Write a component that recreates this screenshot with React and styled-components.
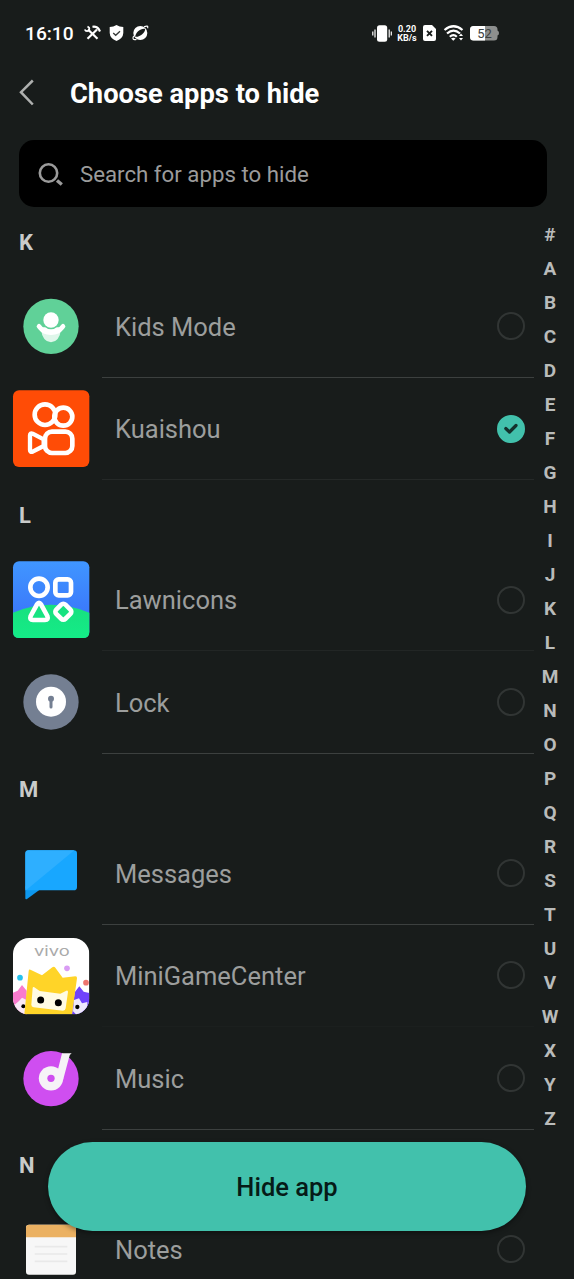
import React from "react";
import styled, { createGlobalStyle, css } from "styled-components";

const GlobalStyle = createGlobalStyle`
  *, *::before, *::after { box-sizing: border-box; }
  body { margin: 0; background: #181c1b; font-family: Roboto, "Liberation Sans", sans-serif; }
`;

const Screen = styled.main`
  position: relative;
  width: 574px;
  height: 1279px;
  overflow: hidden;
  display: flex;
  flex-direction: column;
  background: #181c1b;
  color: #fff;
`;

const StatusBar = styled.header`
  display: flex;
  flex: none;
  align-items: center;
  height: 66px;
  padding: 0 75px 0 25px;
`;

const StatusGroup = styled.div`
  display: flex;
  align-items: center;
  gap: ${(p) => p.$gap}px;
  margin-left: ${(p) => (p.$end ? "auto" : "0")};
`;

const Clock = styled.span`
  width: 51px;
  padding-top: 1px;
  font-size: 19.2px;
  font-weight: 500;
  line-height: 24px;
  white-space: nowrap;
`;

const NetSpeed = styled.span`
  width: 20px;
  font-size: 9px;
  font-weight: 700;
  line-height: 8.5px;
  text-align: center;
  white-space: nowrap;
  margin: 1px -1px 0 -2px;
`;

const Glyph = styled.svg`
  display: block;
  flex: none;
  overflow: visible;
`;

const TitleBar = styled.div`
  display: flex;
  flex: none;
  align-items: center;
  height: 56px;
  padding-left: 19px;
`;

const BackButton = styled.button`
  display: flex;
  width: 51px;
  padding: 0 0 2px;
  border: 0;
  background: none;
`;

const Title = styled.h1`
  margin: 0;
  font-size: 27.3px;
  font-weight: 700;
  line-height: 32px;
`;

const SearchBox = styled.div`
  display: flex;
  flex: none;
  align-items: center;
  gap: 17px;
  width: 528px;
  height: 67px;
  margin: 18px 0 0 19px;
  padding: 1px 19px 0;
  border-radius: 15px;
  background: #000;
  color: #9b9b9b;
  font-size: 22.25px;
`;

const Content = styled.div`
  display: flex;
  flex: 1;
  min-height: 0;
  justify-content: space-between;
`;

const AppList = styled.div`
  width: 534px;
`;

const SectionHeader = styled.h2`
  margin: 0;
  height: 68.6px;
  padding: 23px 0 0 19px;
  color: #c9cbca;
  font-size: 22px;
  font-weight: 700;
  line-height: 26px;
`;

const Row = styled.div`
  display: flex;
  align-items: center;
  height: 102.4px;
  padding-left: 12px;
`;

const RowBody = styled.div`
  display: flex;
  flex: 1;
  align-items: center;
  justify-content: space-between;
  height: 100%;
  margin-left: 12px;
  padding: 0 9px 0 13px;
  border-bottom: 1px solid ${(p) => p.$line};
`;

const AppName = styled.span`
  color: #9c9e9d;
  font-size: 25.5px;
  line-height: 32px;
  padding-top: 1.4px;
`;

const Radio = styled.span`
  display: flex;
  align-items: center;
  justify-content: center;
  width: 28px;
  height: 28px;
  border-radius: 50%;
  border: 2px solid #313534;
  ${(p) =>
    p.$on &&
    css`
      border-color: #42c1ac;
      background: #42c1ac;
    `}
`;

const IndexBar = styled.nav`
  display: flex;
  flex-direction: column;
  width: 30px;
  margin-right: 9px;
  padding-top: 11px;
`;

const IndexLetter = styled.span`
  height: 34px;
  color: #b9bbba;
  font-size: 19px;
  font-weight: 700;
  line-height: 34px;
  text-align: center;
`;

const HideButton = styled.button`
  position: absolute;
  left: 48px;
  bottom: 48px;
  width: 478px;
  height: 89px;
  padding: 1px 0 0;
  border: 0;
  border-radius: 45px;
  background: #42c1ac;
  color: #061b17;
  font: 500 25.5px Roboto, "Liberation Sans", sans-serif;
  box-shadow: 0 2px 5px rgba(0, 0, 0, 0.4);
`;

const AppGlyph = styled(Glyph)`
  margin-top: -1px;
`;

const AppIcon = ({ viewBox, children }) => (
  <AppGlyph width="78" height="78" viewBox={viewBox}>
    {children}
  </AppGlyph>
);

const KidsIcon = () => (
  <AppIcon viewBox="36 20 234 234">
    <circle cx="153" cy="138" r="83" fill="#60d198" />
    <path d="M123 146H183Q179 184 153 186Q127 184 123 146Z" fill="#dff6ea" />
    <path d="M117 138C124 145 125 156 153 157C181 156 182 145 189 138" fill="none" stroke="#fff" strokeWidth="14" strokeLinecap="round" />
    <path d="M126 141H180L174 157Q153 165 132 157Z" fill="#fff" />
    <circle cx="153" cy="119" r="28" fill="#60d198" />
    <circle cx="153" cy="119" r="23" fill="#fff" />
  </AppIcon>
);

const KuaishouIcon = () => (
  <AppIcon viewBox="36 329 234 234">
    <rect x="39" y="330" width="229" height="230" rx="18" fill="#ff4c06" />
    <g fill="none" stroke="#fff" strokeWidth="14" strokeLinejoin="round">
      <circle cx="135" cy="403" r="31" />
      <circle cx="190" cy="409" r="27" />
      <rect x="135" y="454" width="82" height="64" rx="21" />
      <path d="M90 465Q90 457 98 460L131 477V497L98 514Q90 517 90 509Z" strokeWidth="13" />
    </g>
  </AppIcon>
);

const LawniconsIcon = () => (
  <AppIcon viewBox="36 33 234 234">
    <defs>
      <linearGradient id="sky" x1="0" y1="0" x2="0" y2="1">
        <stop offset="0" stopColor="#4096ff" />
        <stop offset="0.65" stopColor="#3b7afb" />
      </linearGradient>
      <linearGradient id="lawn" x1="0" y1="0" x2="0" y2="1">
        <stop offset="0" stopColor="#18e07f" />
        <stop offset="1" stopColor="#14ec87" />
      </linearGradient>
    </defs>
    <rect x="39" y="34" width="229" height="230" rx="18" fill="url(#sky)" />
    <path d="M39 188Q153 141 268 188V246Q268 264 250 264H57Q39 264 39 246Z" fill="url(#lawn)" />
    <g fill="none" stroke="#fff" strokeWidth="14" strokeLinejoin="round">
      <circle cx="117" cy="112" r="26" />
      <rect x="166" y="88" width="47" height="48" rx="10" />
      <path d="M111 163Q117 154 123 163L142 198Q146 210 135 210H99Q88 210 92 198Z" />
      <rect x="170.500" y="165.500" width="39" height="39" rx="9" transform="rotate(45 190 185)" />
    </g>
  </AppIcon>
);

const LockIcon = () => (
  <AppIcon viewBox="36 340 234 234">
    <circle cx="153" cy="457" r="83" fill="#747f92" />
    <circle cx="153" cy="456" r="45" fill="#fff" />
    <circle cx="153" cy="447" r="9" fill="#747f92" />
    <path d="M153 447V472" stroke="#747f92" strokeWidth="9" strokeLinecap="round" />
  </AppIcon>
);

const MessagesIcon = () => (
  <AppIcon viewBox="36 -19 234 234">
    <path d="M76 138V173Q76 179 81 176L119 148Z" fill="#0d97ee" />
    <rect x="76" y="30" width="155" height="120" rx="10" fill="#18a7ff" />
    <path d="M76 150V40Q76 30 86 30H223L78 150Z" fill="#2eafff" />
  </AppIcon>
);

const MiniGameIcon = () => (
  <AppIcon viewBox="36 286 234 234">
    <defs>
      <clipPath id="tile">
        <rect x="39" y="292" width="229" height="229" rx="48" />
      </clipPath>
    </defs>
    <g clipPath="url(#tile)">
      <rect x="39" y="292" width="229" height="229" fill="#fff" />
      <text x="102" y="345" fontFamily="Inter, sans-serif" fontSize="41" fontWeight="400" fill="#aaa" textLength="107" lengthAdjust="spacingAndGlyphs">vivo</text>
      <circle cx="60" cy="411" r="8.500" fill="#25c2ed" />
      <circle cx="201" cy="383" r="8.500" fill="#d99cf4" />
      <circle cx="258" cy="426" r="8.500" fill="#ee756e" />
      <path d="M39 456L53 450L66 433L80 450V521H39Z" fill="#f97bce" />
      <path d="M44 492L57 481L66 471L80 478V521H48Z" fill="#f9e9f6" />
      <circle cx="70" cy="497" r="6" />
      <path d="M224 455L238 437L251 453L268 457V521H216Z" fill="#7043fb" />
      <path d="M222 478L237 473L246 488L262 484V521H228L219 512Z" fill="#eee8fc" />
      <circle cx="232" cy="499" r="6.500" />
      <path d="M86 391Q87 384 93 388L126 404L157 380Q162 376 166 381L188 411L226 407Q232 407 231 413L216 521H73Z" fill="#ffd428" />
      <path d="M98 442Q99 437 103 440L119 451L181 459L199 450Q204 448 204 454L197 503Q196 510 189 510L101 500Q94 499 94 492Z" fill="#fffbe3" />
      <circle cx="122" cy="478" r="10.500" />
      <circle cx="175" cy="486" r="10.500" />
    </g>
  </AppIcon>
);

const MusicIcon = () => (
  <AppIcon viewBox="36 596 234 234">
    <circle cx="153" cy="715" r="83" fill="#cf4ef0" />
    <path d="M186 639H215Q208 643 207 652L189 720L172 695Z" fill="#f6f3f7" />
    <circle cx="153" cy="714" r="36.500" fill="#f6f3f7" />
    <circle cx="153" cy="714" r="11" fill="#cf4ef0" />
  </AppIcon>
);

const NotesIcon = () => (
  <AppIcon viewBox="36 268 234 234">
    <rect x="78" y="312" width="150" height="150" rx="9" fill="#f7f7f7" />
    <path d="M78 350V321Q78 312 87 312H219Q228 312 228 321V350Z" fill="#ebb162" />
    <path d="M104 378H202M104 400H202M104 422H202" stroke="#e9e9e9" strokeWidth="5" />
  </AppIcon>
);

const sections = [
  { letter: "K", apps: [
    { name: "Kids Mode", icon: KidsIcon, line: "#3c403f" },
    { name: "Kuaishou", icon: KuaishouIcon, line: "#252928", on: true },
  ] },
  { letter: "L", apps: [
    { name: "Lawnicons", icon: LawniconsIcon, line: "#222625" },
    { name: "Lock", icon: LockIcon, line: "#3c403f" },
  ] },
  { letter: "M", apps: [
    { name: "Messages", icon: MessagesIcon, line: "#3c403f" },
    { name: "MiniGameCenter", icon: MiniGameIcon, line: "#1b1f1e" },
    { name: "Music", icon: MusicIcon, line: "#3c403f" },
  ] },
  { letter: "N", apps: [{ name: "Notes", icon: NotesIcon, line: "#3c403f" }] },
];

const StatusIcons = () => (
  <StatusBar>
    <StatusGroup $gap={8}>
      <Clock>16:10</Clock>
      <Glyph width="17" height="16" viewBox="0 0 17 16" fill="none" stroke="#fff">
        <path d="M3.500 13.800L13 4.500" strokeWidth="2.200" />
        <path d="M4 4.500L13.500 13.800" strokeWidth="2.200" />
        <path d="M0.800 4.500Q1.500 6.500 4 6Q6 4.500 5 2.500L3.500 1.500" strokeWidth="1.700" />
        <path d="M8.500 1.800Q12.500 1 15 4.500L16 6.500" strokeWidth="2.200" />
      </Glyph>
      <Glyph width="15" height="16" viewBox="0 0 15 16">
        <path d="M7.500 0Q10.500 2 14.300 2V8Q14 13.500 7.500 16Q1 13.500 0.700 8V2Q4.500 2 7.500 0Z" fill="#fff" />
        <path d="M4.200 8L6.700 10.300L11 6.200" fill="none" stroke="#353938" strokeWidth="1.300" />
      </Glyph>
      <Glyph width="17" height="16" viewBox="0 0 17 16">
        <circle cx="8.300" cy="8" r="7" fill="#fff" />
        <path d="M3.200 11.800C3.200 7.500 9 2.800 13.200 3.800C13.200 8 7.500 12.500 3.200 11.800Z" fill="#181c1b" />
        <path d="M12 1.800Q16.800 -0.200 15.600 3.200M1.600 11Q-0.500 15.500 4.500 14.300" fill="none" stroke="#fff" strokeWidth="1.200" />
      </Glyph>
    </StatusGroup>
    <StatusGroup $end $gap={7}>
      <Glyph width="20" height="17" viewBox="0 0 20 17">
        <rect x="5" y="0.300" width="10.200" height="16.400" rx="2.500" fill="#fff" />
        <path d="M0.800 6.500V10.500M3 4.500V12.500M17.200 4.500V12.500M19.300 6.500V10.500" stroke="#fff" strokeWidth="1.200" />
      </Glyph>
      <NetSpeed>0.20<br />KB/s</NetSpeed>
      <Glyph width="14" height="16" viewBox="0 0 14 16">
        <path d="M2 0H9L13 4V14Q13 16 11 16H2Q0 16 0 14V2Q0 0 2 0Z" fill="#fff" />
        <path d="M4 5.800L9 10.800M9 5.800L4 10.800" stroke="#181c1b" strokeWidth="1.900" />
      </Glyph>
      <Glyph width="19" height="16" viewBox="0 0 19 16">
        <g fill="none" stroke="#fff" strokeWidth="2.200">
          <path d="M0.500 5Q9.500 -2.500 18.500 5" />
          <path d="M3 8.500Q9.500 2.700 16 8.500" />
          <path d="M5.800 11.700Q9.500 8.400 12.800 11.700" />
        </g>
        <path d="M7 13.500Q9.500 12 11.600 13.500L9.300 15.800Z" fill="#fff" />
        <path d="M17 8.500L19 11H15ZM17 15.500L19 13H15Z" fill="#fff" />
      </Glyph>
      <Glyph width="29" height="16" viewBox="0 0 29 16">
        <path d="M3.500 1H24Q27.500 1 27.500 4.500V5.500Q29 6 29 8Q29 10 27.500 10.500V12Q27.500 15.500 24 15.500H3.500Q0 15.500 0 12V4.500Q0 1 3.500 1Z" fill="#8d8f8e" />
        <path d="M15 1H3.500Q0 1 0 4.500V12Q0 15.500 3.500 15.500H15Z" fill="#fff" />
        <text x="14.500" y="13" textAnchor="middle" fontFamily="Roboto, sans-serif" fontSize="13" fill="#3c4140">52</text>
      </Glyph>
    </StatusGroup>
  </StatusBar>
);

export default function App() {
  return (
    <Screen>
      <GlobalStyle />
      <StatusIcons />
      <TitleBar>
        <BackButton aria-label="Back">
          <Glyph width="16" height="28" viewBox="0 0 16 28" fill="none" stroke="#aeb0af" strokeWidth="2.500">
            <path d="M13.800 1.500L2 13.200L13.800 25.500" />
          </Glyph>
        </BackButton>
        <Title>Choose apps to hide</Title>
      </TitleBar>
      <SearchBox>
        <Glyph width="25" height="24" viewBox="0 0 25 24" fill="none" stroke="#9b9b9b" strokeWidth="2.600">
          <circle cx="10.500" cy="11" r="8.700" />
          <path d="M19 18.500L23.800 22.500" strokeWidth="3.400" />
        </Glyph>
        Search for apps to hide
      </SearchBox>
      <Content>
        <AppList>
          {sections.map(({ letter, apps }) => (
            <section key={letter}>
              <SectionHeader>{letter}</SectionHeader>
              {apps.map(({ name, icon: Icon, line, on }) => (
                <Row key={name}>
                  <Icon />
                  <RowBody $line={line}>
                    <AppName>{name}</AppName>
                    <Radio $on={on}>
                      {on && (
                        <Glyph width="14" height="12" viewBox="0 0 14 12" fill="none" stroke="#14322d" strokeWidth="3.200">
                          <path d="M1.800 5.500L5.500 9L12 2.500" strokeLinecap="round" strokeLinejoin="round" />
                        </Glyph>
                      )}
                    </Radio>
                  </RowBody>
                </Row>
              ))}
            </section>
          ))}
        </AppList>
        <IndexBar>
          {"#ABCDEFGHIJKLMNOPQRSTUVWXYZ".split("").map((letter) => (
            <IndexLetter key={letter}>{letter}</IndexLetter>
          ))}
        </IndexBar>
      </Content>
      <HideButton>Hide app</HideButton>
    </Screen>
  );
}
